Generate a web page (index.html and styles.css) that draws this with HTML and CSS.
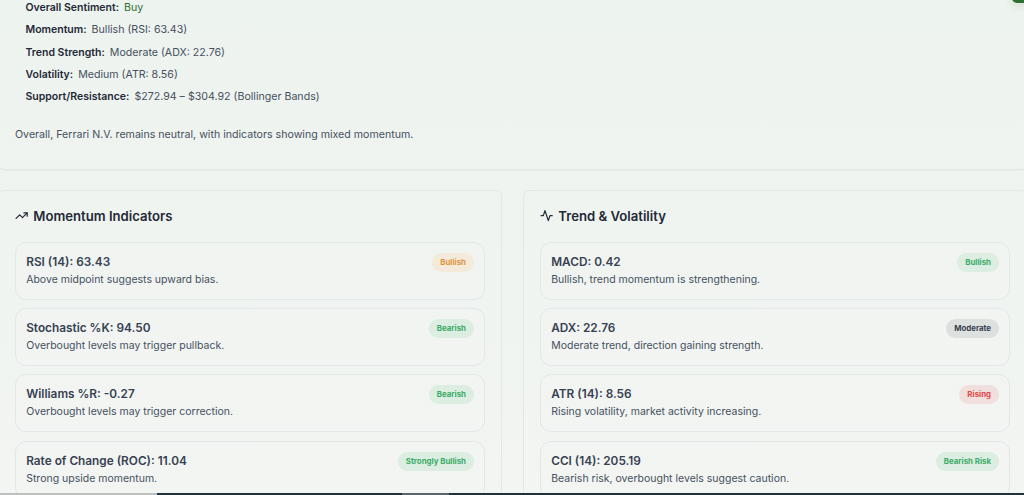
FILE: index.html
```
<!DOCTYPE html>
<html lang="en">

<head>
  <meta charset="UTF-8" />
  <meta name="viewport" content="width=device-width, initial-scale=1.0" />
  <link rel="stylesheet" href="styles.css">
  <title>Technical Analysis</title>
</head>

<body>
  <main class="page">
    <section class="summary">
      <ul class="summary-list">
        <li><strong>Overall Sentiment:</strong> <span class="buy">Buy</span></li>
        <li><strong>Momentum:</strong> <span>Bullish (RSI: 63.43)</span></li>
        <li><strong>Trend Strength:</strong> <span>Moderate (ADX: 22.76)</span></li>
        <li><strong>Volatility:</strong> <span>Medium (ATR: 8.56)</span></li>
        <li><strong>Support/Resistance:</strong> <span>$272.94 – $304.92 (Bollinger Bands)</span></li>
      </ul>
      <p class="summary-note">Overall, Ferrari N.V. remains neutral, with indicators showing mixed momentum.</p>
    </section>

    <div class="panels">
      <section class="panel">
        <h2 class="panel-title">
          <svg class="icon" viewBox="0 0 24 24"><path d="M22 7 13.5 15.5 8.5 10.5 2 17" /><path d="M16 7h6v6" /></svg>
          Momentum Indicators
        </h2>
        <div class="card">
          <div>
            <h3>RSI (14): 63.43</h3>
            <p>Above midpoint suggests upward bias.</p>
          </div>
          <span class="badge orange">Bullish</span>
        </div>
        <div class="card">
          <div>
            <h3>Stochastic %K: 94.50</h3>
            <p>Overbought levels may trigger pullback.</p>
          </div>
          <span class="badge green">Bearish</span>
        </div>
        <div class="card">
          <div>
            <h3>Williams %R: -0.27</h3>
            <p>Overbought levels may trigger correction.</p>
          </div>
          <span class="badge green">Bearish</span>
        </div>
        <div class="card">
          <div>
            <h3>Rate of Change (ROC): 11.04</h3>
            <p>Strong upside momentum.</p>
          </div>
          <span class="badge green">Strongly Bullish</span>
        </div>
      </section>

      <section class="panel">
        <h2 class="panel-title">
          <svg class="icon" viewBox="0 0 24 24"><path d="M22 12h-4l-3 9L9 3l-3 9H2" /></svg>
          Trend &amp; Volatility
        </h2>
        <div class="card">
          <div>
            <h3>MACD: 0.42</h3>
            <p>Bullish, trend momentum is strengthening.</p>
          </div>
          <span class="badge green">Bullish</span>
        </div>
        <div class="card">
          <div>
            <h3>ADX: 22.76</h3>
            <p>Moderate trend, direction gaining strength.</p>
          </div>
          <span class="badge gray">Moderate</span>
        </div>
        <div class="card">
          <div>
            <h3>ATR (14): 8.56</h3>
            <p>Rising volatility, market activity increasing.</p>
          </div>
          <span class="badge red">Rising</span>
        </div>
        <div class="card">
          <div>
            <h3>CCI (14): 205.19</h3>
            <p>Bearish risk, overbought levels suggest caution.</p>
          </div>
          <span class="badge green">Bearish Risk</span>
        </div>
      </section>
    </div>
  </main>

  <div class="floating-btn"></div>
  <div class="bottom-bar">
    <div class="bar-light"></div>
    <div class="bar-thumb"></div>
  </div>
</body>

</html>
```

FILE: styles.css
```
* {
  box-sizing: border-box;
  padding: 0;
  margin: 0;
}

body {
  position: relative;
  height: 495px;
  overflow: hidden;
  background: linear-gradient(to bottom, #edf3ee, #f2f5f2);
  font-family: Inter, "Liberation Sans", sans-serif;
  font-size: 10.63px;
  color: #465060;
}

.page {
  width: 1029px;
  height: 495px;
  margin-left: -2px;
  overflow: hidden;
}

.summary {
  height: 170px;
  padding: 1px 16px 0;
  border: 1px solid #e3e8e6;
  border-top: none;
  border-radius: 0 0 6px 6px;
  box-shadow: 0 1px 1px rgba(0, 0, 0, .03);
}

.summary-list {
  list-style: none;
  padding-left: 10.5px;
}

.summary-list li {
  height: 22.25px;
  line-height: 14px;
}

.summary-list strong {
  font-weight: 600;
  font-size: 10.5px;
  color: #1f2937;
  margin-right: 2px;
}

.summary-list .buy {
  color: #2e7031;
}

.summary-note {
  margin-top: 16.2px;
  line-height: 14px;
}

.panels {
  display: grid;
  grid-template-columns: 1fr 1fr;
  gap: 21px;
  margin-top: 20px;
}

.panel {
  height: 330px;
  padding: 16px;
  border: 1px solid #e3e7e9;
  border-radius: 6px;
}

.panel-title {
  display: flex;
  align-items: center;
  gap: 5px;
  height: 18px;
  margin-bottom: 16.6px;
  font-size: 13.15px;
  font-weight: 600;
  color: #1f2937;
}

.icon {
  width: 13.3px;
  height: 13.3px;
  fill: none;
  stroke: currentColor;
  stroke-width: 2.2;
  stroke-linecap: round;
  stroke-linejoin: round;
}

.card {
  display: flex;
  justify-content: space-between;
  align-items: flex-start;
  height: 58px;
  margin-bottom: 8.4px;
  padding: 10px 10px 0 10.2px;
  background: rgba(255, 255, 255, .08);
  border: 1px solid #e4e7ea;
  border-radius: 11px;
}

.card h3 {
  font-size: 11.82px;
  font-weight: 600;
  line-height: 18px;
  color: #374151;
}

.card p {
  font-size: 10.5px;
  line-height: 18.4px;
}

.badge {
  height: 19px;
  padding: 0 8px;
  border-radius: 10px;
  font-size: 7.85px;
  font-weight: 700;
  line-height: 18.5px;
}

.green {
  background: #dcede1;
  color: #3bab68;
}

.orange {
  background: #f3ead9;
  color: #df943f;
}

.gray {
  background: #dce0df;
  color: #374151;
}

.red {
  background: #f1dfdd;
  color: #e04848;
}

.floating-btn {
  position: absolute;
  top: -20px;
  right: -20px;
  width: 32px;
  height: 23px;
  background: #2e7031;
  border-radius: 5px;
  box-shadow: 0 3px 10px rgba(0, 60, 20, .1);
}

.bottom-bar {
  position: absolute;
  left: 0;
  bottom: 0;
  display: flex;
  width: 100%;
  height: 2px;
  background: #20333b;
}

.bar-light {
  width: 157px;
  margin-right: 245px;
  background: #bcc1c0;
}

.bar-thumb {
  width: 47px;
  background: #59666c;
}
```
